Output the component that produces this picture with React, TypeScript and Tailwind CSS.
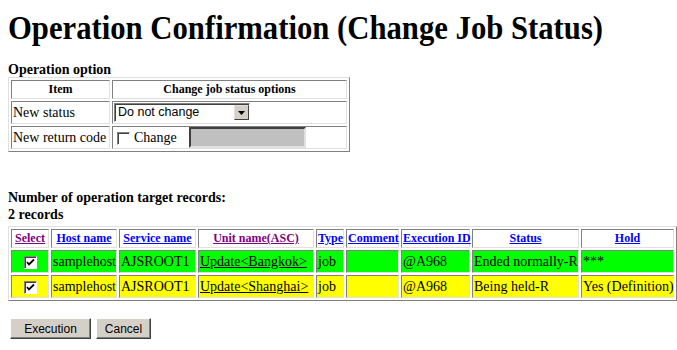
import React from 'react';

const serif = { fontFamily: '"Liberation Serif", "Times New Roman", serif' };
const sans = { fontFamily: '"Liberation Sans", Arial, sans-serif' };

const hdrCell =
  'border border-t-[#808080] border-l-[#808080] border-b-[#e0e0e0] border-r-[#e0e0e0] bg-white px-[1px] py-[1px] text-center text-[12px] font-bold leading-[15px] whitespace-nowrap';
const bodyCell =
  'border border-t-[#808080] border-l-[#808080] border-b-[#e0e0e0] border-r-[#e0e0e0] px-[1px] text-[14px] leading-[18px] whitespace-nowrap';

function Check({ checked }: { checked?: boolean }) {
  return (
    <span className="inline-flex h-[13px] w-[13px] items-center justify-center border border-t-[#808080] border-l-[#808080] border-b-white border-r-white bg-white align-middle shadow-[inset_1px_1px_0_#404040]">
      {checked && (
        <svg width="9" height="9" viewBox="0 0 9 9">
          <path d="M1 4 L3 6.5 L8 1.5" stroke="#000" strokeWidth="1.8" fill="none" />
        </svg>
      )}
    </span>
  );
}

function Btn({ label, w }: { label: string; w: string }) {
  return (
    <button
      className={`${w} h-[21px] border border-t-white border-l-white border-b-[#404040] border-r-[#404040] bg-[#d4d0c8] text-[12px] text-black shadow-[inset_-1px_-1px_0_#808080]`}
      style={sans}
    >
      {label}
    </button>
  );
}

const rows = [
  { bg: 'bg-[#00ff00]', unit: 'Update<Bangkok>', status: 'Ended normally-R', hold: '***' },
  { bg: 'bg-[#ffff00]', unit: 'Update<Shanghai>', status: 'Being held-R', hold: 'Yes (Definition)' },
];

export default function App() {
  return (
    <div className="h-[350px] w-[677px] overflow-hidden bg-white px-[8px] text-black" style={serif}>
      <h1 className="mt-[9px] origin-left scale-x-[0.93] whitespace-nowrap text-[33px] font-bold leading-[38px]">
        Operation Confirmation (Change Job Status)
      </h1>

      <div className="mt-[15px] text-[14px] font-bold leading-[15px]">Operation option</div>
      <table className="border-separate border-spacing-[2px] border border-t-[#e0e0e0] border-l-[#e0e0e0] border-b-[#808080] border-r-[#808080]">
        <tbody>
          <tr>
            <th className={`${hdrCell} w-[99px]`}>Item</th>
            <th className={`${hdrCell} w-[235px]`}>Change job status options</th>
          </tr>
          <tr>
            <td className={`${bodyCell} h-[23px]`}>New status</td>
            <td className={`${bodyCell} h-[23px]`}>
              <div
                className="flex h-[19px] w-[136px] items-center border border-t-[#808080] border-l-[#808080] border-b-white border-r-white bg-white pl-[3px] text-[12.5px] leading-[17px] shadow-[inset_1px_1px_0_#404040]"
                style={sans}
              >
                <span className="flex-1">Do not change</span>
                <span className="flex h-[15px] w-[15px] items-center justify-center border border-t-[#e0e0e0] border-l-[#e0e0e0] border-b-[#404040] border-r-[#404040] bg-[#d4d0c8]">
                  <svg width="7" height="4" viewBox="0 0 7 4">
                    <path d="M0 0 H7 L3.5 4 Z" fill="#000" />
                  </svg>
                </span>
              </div>
            </td>
          </tr>
          <tr>
            <td className={`${bodyCell} h-[23px]`}>New return code</td>
            <td className={`${bodyCell} h-[23px]`}>
              <div className="flex items-center">
                <span className="ml-[3px]">
                  <Check />
                </span>
                <span className="ml-[4px]">Change</span>
                <span className="ml-[12px] h-[21px] w-[117px] border-2 border-t-[#404040] border-l-[#404040] border-b-[#e0e0e0] border-r-[#e0e0e0] bg-[#c0c0c0]" />
              </div>
            </td>
          </tr>
        </tbody>
      </table>

      <div className="mt-[37px] text-[14px] font-bold leading-[17px]">
        Number of operation target records:
        <br />2 records
      </div>
      <table className="mt-[3px] w-[669px] max-w-none table-fixed border-separate border-spacing-[2px] border border-t-[#e0e0e0] border-l-[#e0e0e0] border-b-[#808080] border-r-[#808080]">
        <thead>
          <tr>
            <th className={`${hdrCell} w-[38px] text-[#800080]`}><span className="underline">Select</span></th>
            <th className={`${hdrCell} w-[66px] text-[#0000ff]`}><span className="underline">Host name</span></th>
            <th className={`${hdrCell} w-[77px] text-[#0000ff]`}><span className="underline">Service name</span></th>
            <th className={`${hdrCell} w-[116px] text-[#800080]`}><span className="underline">Unit name(ASC)</span></th>
            <th className={`${hdrCell} w-[28px] text-[#0000ff]`}><span className="underline">Type</span></th>
            <th className={`${hdrCell} w-[53px] text-[#0000ff]`}><span className="underline">Comment</span></th>
            <th className={`${hdrCell} w-[69px] text-[#0000ff]`}><span className="underline">Execution ID</span></th>
            <th className={`${hdrCell} w-[107px] text-[#0000ff]`}><span className="underline">Status</span></th>
            <th className={`${hdrCell} w-[93px] text-[#0000ff]`}><span className="underline">Hold</span></th>
          </tr>
        </thead>
        <tbody>
          {rows.map((r) => (
            <tr key={r.unit}>
              <td className={`${bodyCell} ${r.bg} h-[23px] text-center`}>
                <Check checked />
              </td>
              <td className={`${bodyCell} ${r.bg}`}>samplehost</td>
              <td className={`${bodyCell} ${r.bg}`}>AJSROOT1</td>
              <td className={`${bodyCell} ${r.bg}`}>
                <span className="underline">{r.unit}</span>
              </td>
              <td className={`${bodyCell} ${r.bg}`}>job</td>
              <td className={`${bodyCell} ${r.bg}`}></td>
              <td className={`${bodyCell} ${r.bg}`}>@A968</td>
              <td className={`${bodyCell} ${r.bg}`}>{r.status}</td>
              <td className={`${bodyCell} ${r.bg}`}>{r.hold}</td>
            </tr>
          ))}
        </tbody>
      </table>

      <div className="mt-[17px] flex gap-[5px] pl-[2px]">
        <Btn label="Execution" w="w-[81px]" />
        <Btn label="Cancel" w="w-[55px]" />
      </div>
    </div>
  );
}
